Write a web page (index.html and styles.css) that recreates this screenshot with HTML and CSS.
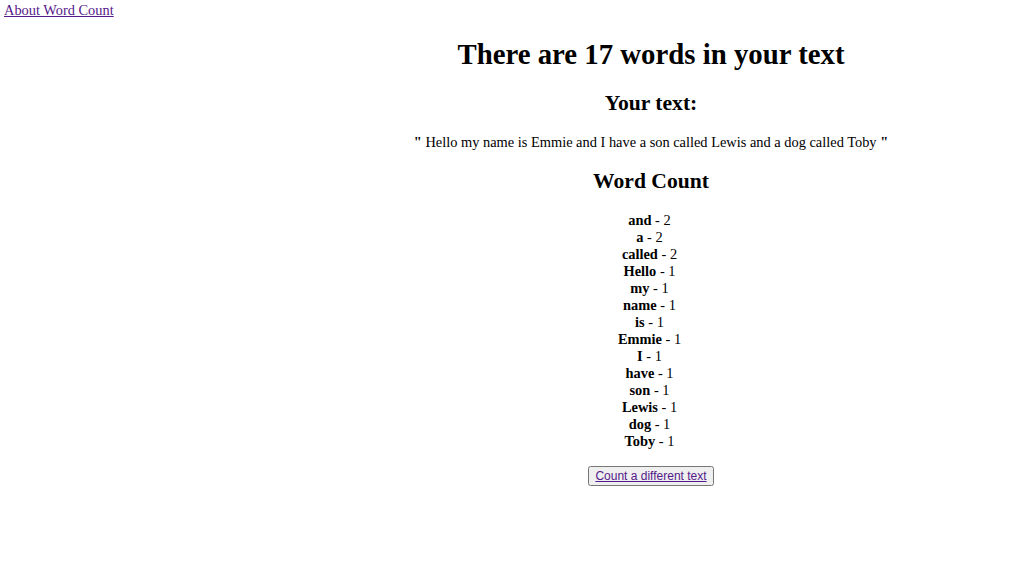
FILE: index.html
```html
<!DOCTYPE html>
<html>
<head>
<meta charset="utf-8">
<title>Word Count</title>
<link rel="stylesheet" href="styles.css">
</head>
<body>
<div class="page">
  <nav class="side">
    <a class="nav-link" href="#">About Word Count</a>
  </nav>
  <main class="main">
    <h1 class="title">There are 17 words in your text</h1>
    <h2 class="sub sub-text">Your text:</h2>
    <p class="quote"><b>"</b> Hello my name is Emmie and I have a son called Lewis and a dog called Toby <b>"</b></p>
    <h2 class="sub sub-count">Word Count</h2>
    <ul class="counts">
      <li><b>and</b> - 2</li>
      <li><b>a</b> - 2</li>
      <li><b>called</b> - 2</li>
      <li><b>Hello</b> - 1</li>
      <li><b>my</b> - 1</li>
      <li><b>name</b> - 1</li>
      <li><b>is</b> - 1</li>
      <li><b>Emmie</b> - 1</li>
      <li><b>I</b> - 1</li>
      <li><b>have</b> - 1</li>
      <li><b>son</b> - 1</li>
      <li><b>Lewis</b> - 1</li>
      <li><b>dog</b> - 1</li>
      <li><b>Toby</b> - 1</li>
    </ul>
    <button class="btn" type="button"><a class="btn-link" href="#">Count a different text</a></button>
  </main>
</div>
</body>
</html>
```
FILE: styles.css
```css
html, body {
  margin: 0;
  padding: 0;
  background: #fff;
  color: #000;
  font-family: "Liberation Serif", "Times New Roman", serif;
  font-size: 14.4px;
}
.page {
  display: grid;
  grid-template-columns: 271px 1fr;
}
.side {
  padding-left: 4px;
  padding-top: 2px;
}
.nav-link {
  color: #551a8b;
}
.main {
  text-align: center;
  padding-top: 38px;
}
.title {
  font-size: 28.8px;
  font-weight: bold;
  margin: 0 0 20px;
}
.sub {
  font-size: 21.6px;
  font-weight: bold;
  margin: 0 0 18px;
}
.quote {
  margin: 0 0 18px;
}
.counts {
  list-style: none;
  margin: 0 0 16px;
  padding: 0 3px 0 0;
  line-height: 17px;
}
.btn {
  font-family: "Liberation Sans", Arial, sans-serif;
  font-size: 12px;
  padding: 1px 5px;
}
.btn-link {
  color: #551a8b;
}
```
